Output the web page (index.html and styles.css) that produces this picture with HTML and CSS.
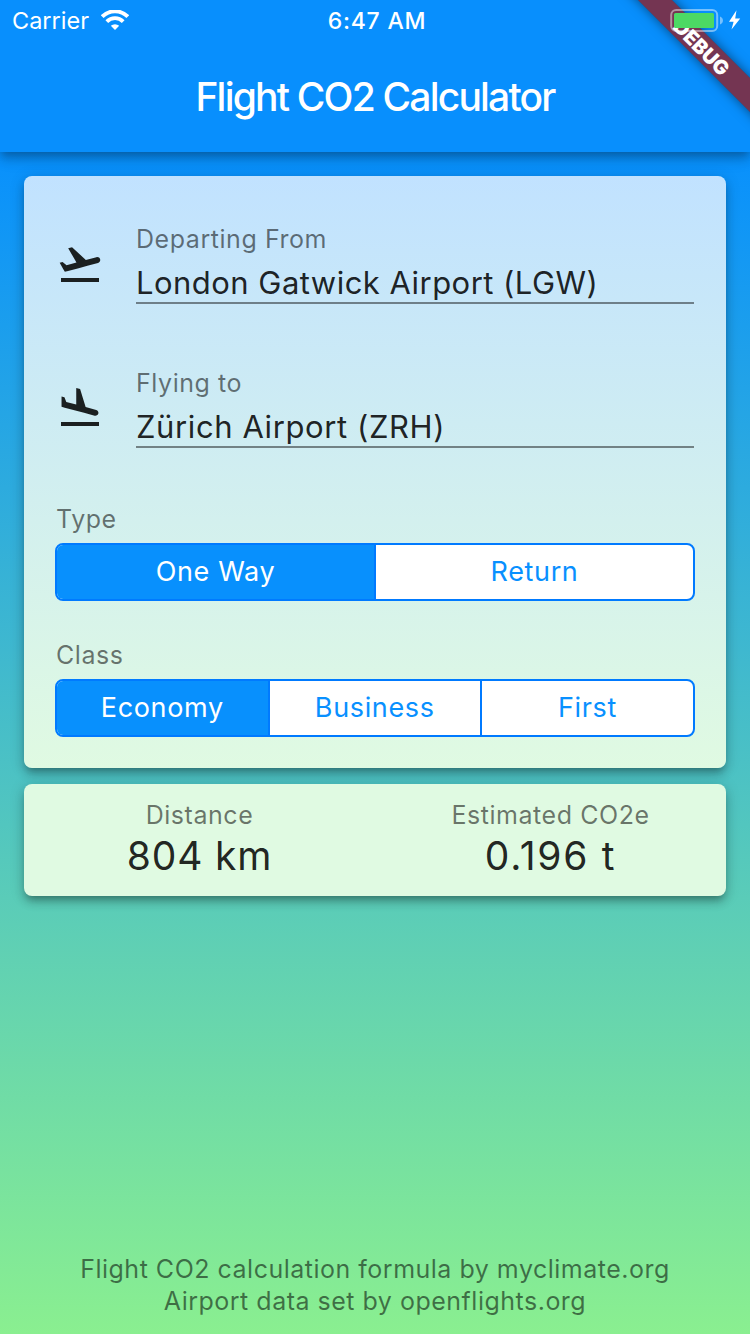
FILE: index.html
```html
<!DOCTYPE html>
<html lang="en">
<head>
<meta charset="utf-8">
<title>Flight CO2 Calculator</title>
<link rel="stylesheet" href="styles.css">
</head>
<body>
<div class="app">
  <header class="app-bar">
    <div class="status-bar">
      <div class="status-left">
        <span class="carrier">Carrier</span>
        <svg class="wifi" viewBox="0 0 28 20" width="28" height="20">
          <g fill="none" stroke="#fff">
            <path d="M1.2 6.6A18.2 18.2 0 0 1 26.8 6.6" stroke-width="4"/>
            <path d="M5.8 11.6A11.6 11.6 0 0 1 22.2 11.6" stroke-width="3.8"/>
          </g>
          <path d="M9.8 15.8A6.2 6.2 0 0 1 18.2 15.8L14 20Z" fill="#fff"/>
        </svg>
      </div>
      <span class="time">6:47 AM</span>
      <div class="status-right"></div>
    </div>
    <h1 class="title">Flight CO2 Calculator</h1>
  </header>

  <div class="debug-corner">
    <div class="debug-band">DEBUG</div>
    <svg class="battery" viewBox="0 0 72 24" width="72" height="24">
      <rect x="1.2" y="2" width="46" height="21" rx="5" fill="none" stroke="#fff" stroke-opacity=".45" stroke-width="2"/>
      <rect x="4" y="5" width="40" height="15" rx="1.5" fill="#4cd964"/>
      <path d="M50 8.6c3.9 1.2 3.9 6.8 0 8z" fill="#fff" fill-opacity=".45"/>
      <path d="M66.5 2.2 59 13.8h4.6L61.5 21.6 70.2 10.4h-5z" fill="#fff"/>
    </svg>
  </div>

  <main class="content">
    <section class="card form">
      <div class="field-row">
        <svg class="field-icon" viewBox="0 0 24 24" width="48" height="48"><path d="M2.5 19h19v2h-19zm19.57-9.36c-.21-.8-1.04-1.28-1.84-1.06L14.92 10l-6.9-6.43-1.93.51 4.14 7.17-4.97 1.33-1.97-1.54-1.45.39 1.82 3.16.77 1.33 1.6-.43 5.31-1.42 4.35-1.16L21 11.49c.81-.23 1.28-1.05 1.07-1.85z"/></svg>
        <div class="field">
          <div class="label">Departing From</div>
          <div class="value value-long">London Gatwick Airport (LGW)</div>
        </div>
      </div>
      <div class="field-row">
        <svg class="field-icon" viewBox="0 0 24 24" width="48" height="48"><path d="M2.5 19h19v2h-19zm7.18-5.73l4.35 1.16 5.31 1.42c.8.21 1.62-.26 1.84-1.06.21-.8-.26-1.62-1.06-1.84l-5.31-1.42-2.76-9.02L10.12 2v8.28L5.15 8.95l-.93-2.32-1.45-.39v5.17l1.6.43 5.31 1.43z"/></svg>
        <div class="field">
          <div class="label">Flying to</div>
          <div class="value">Zürich Airport (ZRH)</div>
        </div>
      </div>
      <div class="option">
        <div class="label">Type</div>
        <div class="segments two">
          <div class="segment active">One Way</div>
          <div class="segment">Return</div>
        </div>
      </div>
      <div class="option">
        <div class="label">Class</div>
        <div class="segments three">
          <div class="segment active">Economy</div>
          <div class="segment">Business</div>
          <div class="segment">First</div>
        </div>
      </div>
    </section>

    <section class="card results">
      <div class="result">
        <div class="label">Distance</div>
        <div class="amount">804 km</div>
      </div>
      <div class="result">
        <div class="label">Estimated CO2e</div>
        <div class="amount amount-wide">0.196 t</div>
      </div>
    </section>
  </main>

  <footer class="footer">
    <div>Flight CO2 calculation formula by myclimate.org</div>
    <div>Airport data set by openflights.org</div>
  </footer>
</div>
</body>
</html>
```
FILE: styles.css
```css
* { box-sizing: border-box; }

body {
  margin: 0;
  font-family: Inter, "Liberation Sans", sans-serif;
}

.app {
  position: relative;
  display: flex;
  flex-direction: column;
  width: 750px;
  height: 1334px;
  overflow: hidden;
  background: linear-gradient(to bottom, #0890fd 152px, #8aef90 100%);
}

.app-bar {
  height: 152px;
  flex: none;
  background: #088ffd;
  color: #fff;
  box-shadow: 0 4px 8px -2px rgba(0, 0, 0, .2), 0 8px 10px rgba(0, 0, 0, .14), 0 2px 20px rgba(0, 0, 0, .12);
}

.status-bar {
  display: grid;
  grid-template-columns: 1fr auto 1fr;
  align-items: center;
  height: 40px;
  padding: 0 8px 0 12px;
}

.status-left { display: flex; align-items: center; gap: 12px; }
.carrier { font-size: 23.5px; font-weight: 400; letter-spacing: 0; }
.time { padding-top: 1px; font-size: 23px; font-weight: 500; letter-spacing: .75px; }

.title {
  margin: 0;
  height: 112px;
  line-height: 113px;
  font-size: 39px;
  font-weight: 500;
  letter-spacing: -1.8px;
  text-align: center;
}

/* Ribbon laid across the top right corner, beneath the battery. */
.debug-corner {
  position: absolute;
  z-index: 1;
  top: 0;
  right: 0;
  width: 160px;
  height: 160px;
  overflow: hidden;
}

.debug-band {
  position: absolute;
  left: 12px;
  top: 35px;
  width: 200px;
  height: 24px;
  line-height: 26px;
  transform: rotate(45deg);
  background: rgba(140, 33, 44, .82);
  box-shadow: 0 0 12px rgba(0, 0, 0, .5);
  color: #fff;
  font-size: 20px;
  font-weight: 900;
  text-align: center;
}

.battery {
  position: absolute;
  top: 8px;
  right: 8px;
}

.content {
  display: flex;
  flex-direction: column;
  gap: 16px;
  padding: 24px 24px 0;
}

.card {
  border-radius: 8px;
  box-shadow: 0 6px 6px -4px rgba(0, 0, 0, .2), 0 6px 10px rgba(0, 0, 0, .2), 0 2px 16px rgba(0, 0, 0, .14);
}

.form {
  height: 592px;
  padding: 48px 31px 0;
  background: linear-gradient(to bottom, #c1e2ff, #e0fae2);
}

.label {
  height: 30px;
  line-height: 30px;
  font-size: 25px;
  letter-spacing: .55px;
  color: rgba(0, 0, 0, .54);
}

.field-row {
  display: flex;
  align-items: center;
  gap: 32px;
  height: 80px;
  margin-bottom: 64px;
  padding: 0 1px;
}

.field-icon { flex: none; fill: #1b2021; }

.field {
  flex: 1;
  height: 80px;
  border-bottom: 2px solid rgba(0, 0, 0, .45);
}

.value {
  height: 48px;
  padding-top: 10px;
  line-height: 38px;
  font-size: 31px;
  letter-spacing: .6px;
  color: rgba(0, 0, 0, .87);
  white-space: nowrap;
}

.value-long { letter-spacing: .47px; }

.option { height: 136px; }
.option .label { padding-left: 1px; height: 39px; }
.field-row + .option { margin-top: -8px; }

.segments {
  display: grid;
  height: 58px;
  border: 2px solid #007aff;
  border-radius: 8px;
  overflow: hidden;
  background: #fff;
}

.two { grid-template-columns: 319px 1fr; }
.three { grid-template-columns: 212.5px 212.5px 1fr; }

.segment {
  line-height: 54px;
  font-size: 27px;
  letter-spacing: .65px;
  text-align: center;
  color: #0890ff;
}

.segment:not(:last-child) { border-right: 2px solid #007aff; }
.segment.active { background: #0890fd; color: #fff; }

.results {
  display: grid;
  grid-template-columns: 1fr 1fr;
  height: 112px;
  padding-top: 16px;
  background: #e0fae2;
  text-align: center;
}

.amount {
  line-height: 52px;
  font-size: 39px;
  font-weight: 420;
  letter-spacing: .8px;
  color: rgba(0, 0, 0, .87);
}

.amount-wide { letter-spacing: 1.7px; }

.footer {
  margin-top: auto;
  padding-bottom: 17px;
  line-height: 32px;
  font-size: 25px;
  letter-spacing: .5px;
  text-align: center;
  color: rgba(0, 0, 0, .54);
}
```
